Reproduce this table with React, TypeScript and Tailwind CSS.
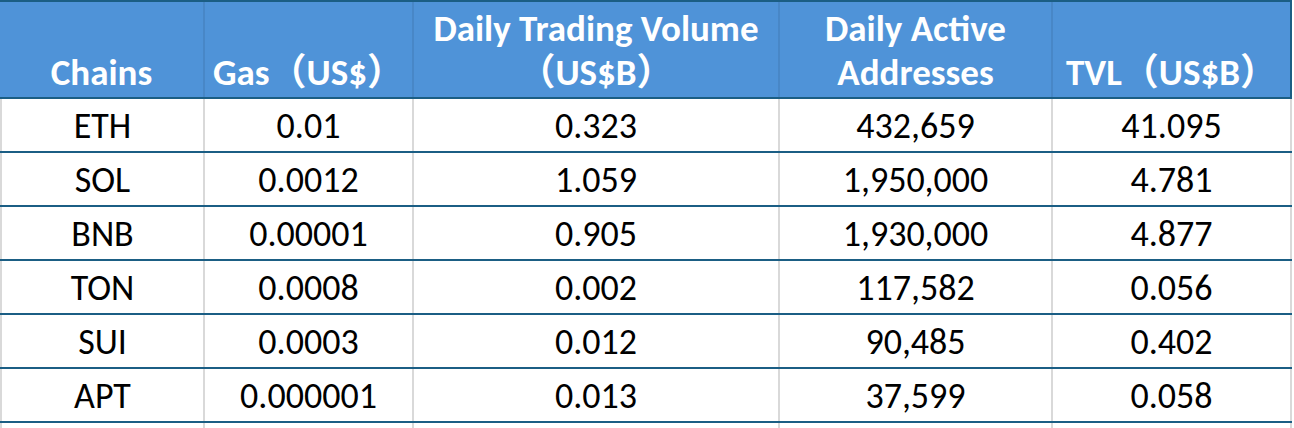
const rows = [
  ["ETH", "0.01", "0.323", "432,659", "41.095"],
  ["SOL", "0.0012", "1.059", "1,950,000", "4.781"],
  ["BNB", "0.00001", "0.905", "1,930,000", "4.877"],
  ["TON", "0.0008", "0.002", "117,582", "0.056"],
  ["SUI", "0.0003", "0.012", "90,485", "0.402"],
  ["APT", "0.000001", "0.013", "37,599", "0.058"],
];

const headers = ["Chains", "Gas（US$）", "Daily Trading Volume\n（US$B）", "Daily Active\nAddresses", "TVL（US$B）"];

const cols = "grid grid-cols-[205px_209px_366px_273px_239px]";

export default function App() {
  return (
    <div className="w-[1294px] h-[428px] bg-white overflow-hidden font-['Carlito','Lato','Noto_Sans_CJK_SC',sans-serif]">
      <div className="w-[1292px]">
        {/* header */}
        <div className={`${cols} h-[99px] bg-[#4f93d8] border-t-2 border-b-2 border-[#1b5e84]`}>
          {headers.map((h, i) => (
            <div
              key={i}
              className={`flex items-end justify-center pb-[2px] text-center text-white font-bold text-[37px] leading-[44px] whitespace-pre-line ${i === 4 ? "border-r-2 border-[#1b5e84]" : "border-r-2 border-[#4887c7]"}`}
            >
              {h}
            </div>
          ))}
        </div>

        {/* body */}
        {rows.map((r) => (
          <div key={r[0]} className={`${cols} h-[54px] border-b-2 border-[#1b5e84]`}>
            {r.map((c, i) => (
              <div
                key={i}
                className={`pt-[3px] text-center text-black text-[36px] leading-[48px] border-r-2 border-[#d9d9d9] ${i === 0 ? "border-l-2" : ""}`}
              >
                {c}
              </div>
            ))}
          </div>
        ))}
        <div className={`${cols} h-[5px]`}>
          {rows[0].map((_, i) => (
            <div key={i} className={`border-r-2 border-[#d9d9d9] ${i === 0 ? "border-l-2" : ""}`} />
          ))}
        </div>
      </div>
    </div>
  );
}
